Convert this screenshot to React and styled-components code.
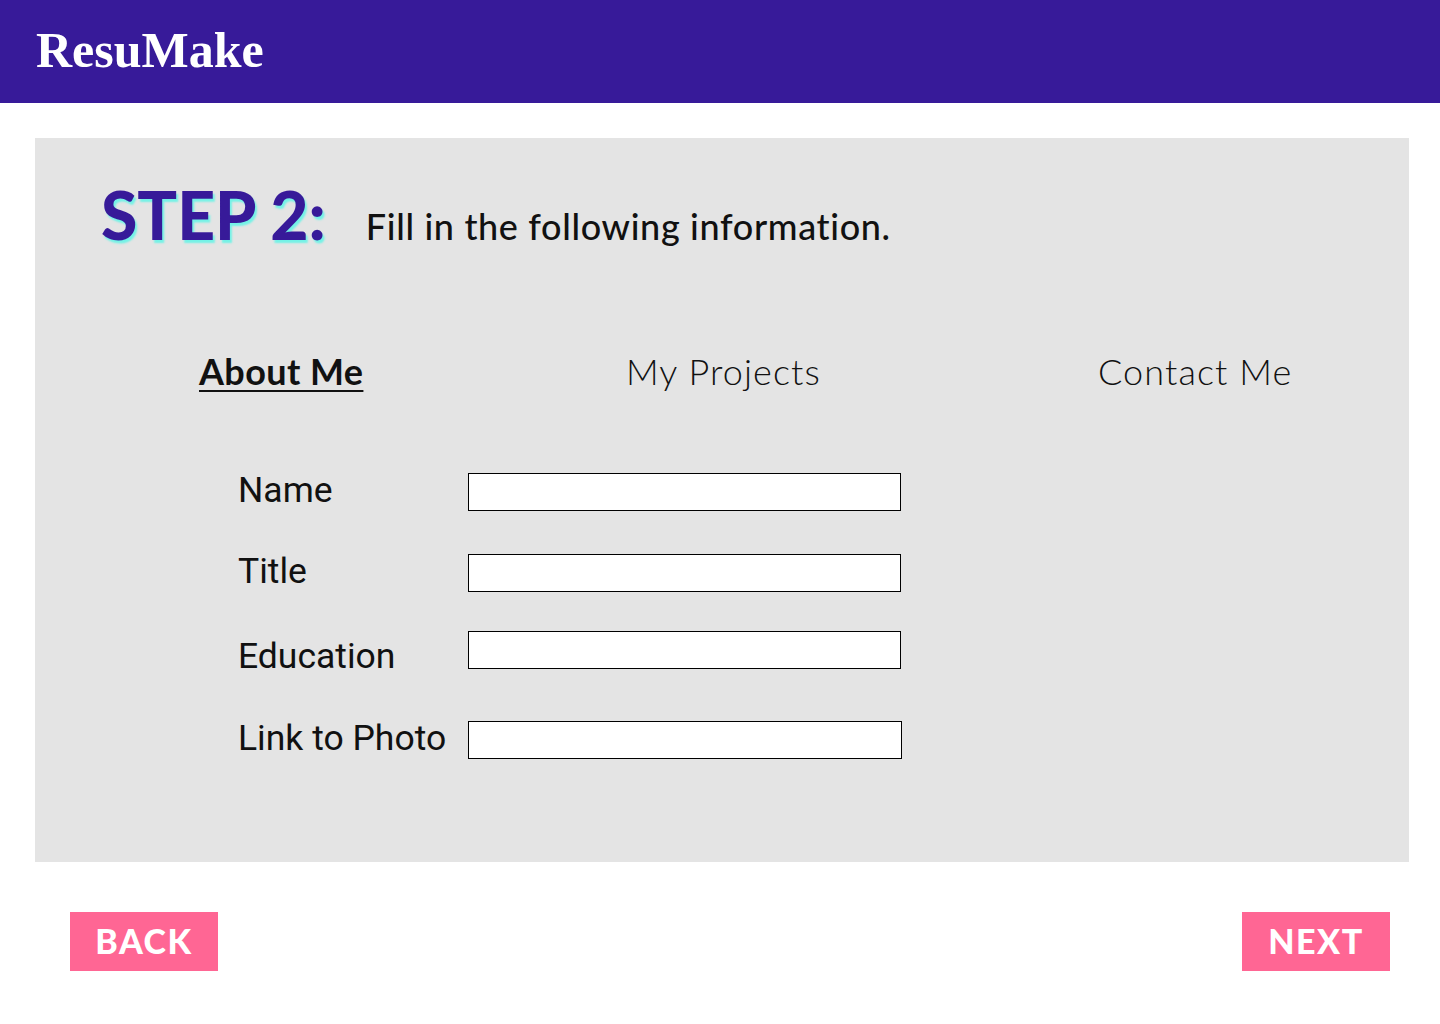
import React from "react";
import styled, { createGlobalStyle } from "styled-components";

const GlobalStyle = createGlobalStyle`
	* {
		box-sizing: border-box;
	}
	body {
		margin: 0;
		background: #ffffff;
		font-family: "Lato", "Open Sans", sans-serif;
	}
`;

const fields = [
	{ label: "Name", gap: 0, drop: 0, width: 433 },
	{ label: "Title", gap: 43, drop: 0, width: 433 },
	{ label: "Education", gap: 39, drop: 8, width: 433 },
	{ label: "Link to Photo", gap: 52, drop: -2, width: 434 },
];

const tabs = ["About Me", "My Projects", "Contact Me"];

const App = () => {
	return (
		<Page>
			<GlobalStyle />
			<Header>
				<Logo>ResuMake</Logo>
			</Header>

			<Panel>
				<StepRow>
					<Step>STEP 2:</Step>
					<Instruction>Fill in the following information.</Instruction>
				</StepRow>

				<Tabs>
					{tabs.map((t, i) => (
						<Tab key={t} active={i === 0}>
							{t}
						</Tab>
					))}
				</Tabs>

				<Form>
					{fields.map((f) => (
						<Row key={f.label} gap={f.gap}>
							<Label drop={f.drop}>{f.label}</Label>
							<Input type='text' w={f.width} />
						</Row>
					))}
				</Form>
			</Panel>

			<Footer>
				<NavButton>BACK</NavButton>
				<NavButton>NEXT</NavButton>
			</Footer>
		</Page>
	);
};

export default App;

const Page = styled.div`
	width: 1440px;
	min-height: 1024px;
`;

const Header = styled.header`
	height: 103px;
	background-color: #371a99;
	display: flex;
	align-items: center;
	padding-left: 36px;
`;

const Logo = styled.h1`
	margin: 0;
	margin-top: -4px;
	color: #ffffff;
	font-family: "Liberation Serif", "DejaVu Serif", serif;
	font-weight: 700;
	font-size: 50px;
	line-height: 1;
`;

const Panel = styled.section`
	margin: 35px 31px 0 35px;
	height: 724px;
	background-color: #e4e4e4;
	padding-top: 44px;
`;

const StepRow = styled.div`
	display: flex;
	align-items: baseline;
	padding-left: 66px;
	height: 66px;
`;

const Step = styled.h2`
	margin: 0;
	font-family: "Lato", sans-serif;
	font-weight: 900;
	font-size: 66px;
	line-height: 1;
	color: #371a99;
	text-shadow: 2px 3px 2px #74f2e6;
	margin-right: 40px;
`;

const Instruction = styled.p`
	margin: 0;
	font-family: "Lato", sans-serif;
	font-weight: 500;
	font-size: 36px;
	line-height: 1;
	letter-spacing: 0.65px;
	color: #111111;
`;

const Tabs = styled.nav`
	margin-top: 105px;
	display: grid;
	grid-template-columns: 427px 472px auto;
	padding-left: 164px;
`;

const Tab = styled.span`
	font-family: "Lato", sans-serif;
	font-size: 36px;
	line-height: 1;
	color: #111111;
	font-weight: ${(p) => (p.active ? 700 : 300)};
	letter-spacing: ${(p) => (p.active ? 0.4 : 1.1)}px;
	text-decoration: ${(p) => (p.active ? "underline" : "none")};
	text-decoration-thickness: 2px;
	text-underline-offset: 5px;
	cursor: pointer;
`;

const Form = styled.div`
	margin-top: 84px;
	padding-left: 203px;
	display: flex;
	flex-direction: column;
`;

const Row = styled.div`
	display: flex;
	align-items: flex-start;
	height: 38px;
	margin-top: ${(p) => p.gap}px;
`;

const Label = styled.label`
	width: 230px;
	flex-shrink: 0;
	font-family: "Roboto", sans-serif;
	font-size: 35.5px;
	line-height: 1;
	color: #111111;
	padding-top: ${(p) => p.drop}px;
	white-space: nowrap;
`;

const Input = styled.input`
	width: ${(p) => p.w}px;
	height: 38px;
	margin: 0;
	border: 1px solid #000000;
	border-radius: 0;
	background: #ffffff;
	outline: none;
	padding: 0 8px;
	font-family: "Roboto", sans-serif;
	font-size: 20px;
`;

const Footer = styled.div`
	display: flex;
	justify-content: space-between;
	padding: 50px 50px 0 70px;
`;

const NavButton = styled.button`
	width: 148px;
	height: 59px;
	border: none;
	outline: none;
	background-color: #ff6694;
	color: #ffffff;
	font-family: "Lato", sans-serif;
	font-weight: 900;
	font-size: 34px;
	letter-spacing: 1.5px;
	line-height: 1;
	padding: 0 0 2px;
	cursor: pointer;
`;
